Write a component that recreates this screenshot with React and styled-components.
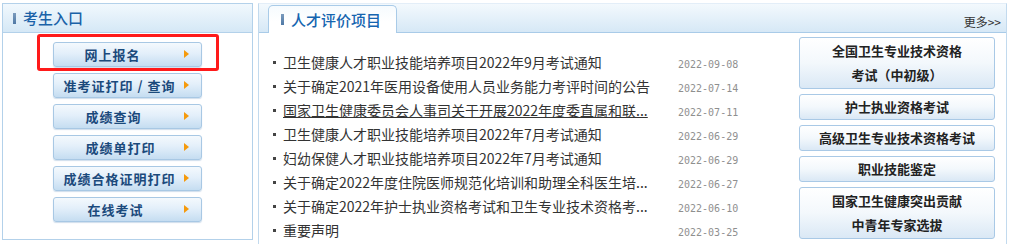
import React from 'react'
import styled, {createGlobalStyle} from 'styled-components'

const GlobalStyle = createGlobalStyle`
  html, body {
    margin: 0;
    padding: 0;
    background: #fff;
    overflow: hidden;
  }
  body {
    font-family: "Noto Sans CJK SC", "Liberation Sans", sans-serif;
    color: #333;
  }
`

const entries = [
  {label: '网上报名', indent: 31},
  {label: '准考证打印 / 查询', indent: 10},
  {label: '成绩查询', indent: 32},
  {label: '成绩单打印', indent: 32},
  {label: '成绩合格证明打印', indent: 10},
  {label: '在线考试', indent: 34},
]

const news = [
  {title: '卫生健康人才职业技能培养项目2022年9月考试通知', date: '2022-09-08'},
  {title: '关于确定2021年医用设备使用人员业务能力考评时间的公告', date: '2022-07-14'},
  {title: '国家卫生健康委员会人事司关于开展2022年度委直属和联...', date: '2022-07-11', active: true},
  {title: '卫生健康人才职业技能培养项目2022年7月考试通知', date: '2022-06-29'},
  {title: '妇幼保健人才职业技能培养项目2022年7月考试通知', date: '2022-06-29'},
  {title: '关于确定2022年度住院医师规范化培训和助理全科医生培...', date: '2022-06-27'},
  {title: '关于确定2022年护士执业资格考试和卫生专业技术资格考...', date: '2022-06-10'},
  {title: '重要声明', date: '2022-03-25'},
]

const projects = [
  ['全国卫生专业技术资格', '考试（中初级）'],
  ['护士执业资格考试'],
  ['高级卫生专业技术资格考试'],
  ['职业技能鉴定'],
  ['国家卫生健康突出贡献', '中青年专家选拔'],
]

export default function App() {
  return (
    <>
      <GlobalStyle />
      <Page>
        <Entrance>
          <EntranceHeader>
            <Marker />
            <HeaderTitle>考生入口</HeaderTitle>
          </EntranceHeader>
          <EntranceBody>
            {entries.map(e => (
              <EntryButton key={e.label} $indent={e.indent}>
                {e.label}
                <Arrow />
              </EntryButton>
            ))}
          </EntranceBody>
          <Highlight />
        </Entrance>

        <Projects>
          <TabBar>
            <Tab>
              <Marker />
              <TabTitle>人才评价项目</TabTitle>
            </Tab>
            <More>更多&gt;&gt;</More>
          </TabBar>
          <ProjectsBody>
            <NewsList>
              {news.map(n => (
                <NewsItem key={n.title + n.date}>
                  <Bullet />
                  <NewsTitle $active={n.active}>{n.title}</NewsTitle>
                  <NewsDate>{n.date}</NewsDate>
                </NewsItem>
              ))}
            </NewsList>
            <ProjectLinks>
              {projects.map(lines => (
                <ProjectButton key={lines[0]} $double={lines.length > 1}>
                  {lines.map(l => <span key={l}>{l}</span>)}
                </ProjectButton>
              ))}
            </ProjectLinks>
          </ProjectsBody>
        </Projects>
      </Page>
    </>
  )
}

const Page = styled.div`
  display: flex;
  align-items: flex-start;
  padding: 3px 0 0 2px;
  gap: 5px;
`

const Entrance = styled.section`
  position: relative;
  box-sizing: border-box;
  width: 251px;
  height: 237px;
  border: 1px solid #b3d1ea;
  background: #fff;
`

const EntranceHeader = styled.div`
  display: flex;
  align-items: center;
  height: 28px;
  padding-left: 10px;
  background: linear-gradient(#f1f8fd, #d5e8f6);
  border-bottom: 1px solid #b3d1ea;
`

const Marker = styled.i`
  display: block;
  width: 3px;
  height: 11px;
  background: linear-gradient(#7b9bbd, #4f79a6);
  margin-right: 7px;
`

const HeaderTitle = styled.h2`
  margin: 0;
  font-size: 15px;
  font-weight: 500;
  line-height: 28px;
  color: #1a62a8;
`

const EntranceBody = styled.div`
  display: flex;
  flex-direction: column;
  align-items: center;
  gap: 6px;
  padding-top: 9px;
  padding-right: 1px;
`

const EntryButton = styled.a`
  position: relative;
  display: flex;
  align-items: center;
  box-sizing: border-box;
  width: 149px;
  height: 25px;
  padding-left: ${p => p.$indent}px;
  border: 1px solid #a8c8e4;
  border-radius: 3px;
  background: linear-gradient(#f4f9fd 0%, #e3effa 45%, #c5ddf1 100%);
  box-shadow: 0 1px 1px rgba(120, 160, 200, 0.35);
  font-size: 13px;
  font-weight: 700;
  letter-spacing: 1px;
  color: #1b4a7c;
  white-space: nowrap;
  cursor: pointer;
`

const Arrow = styled.b`
  position: absolute;
  left: 130px;
  top: 7px;
  width: 0;
  height: 0;
  border-top: 4px solid transparent;
  border-bottom: 4px solid transparent;
  border-left: 5px solid #f59a0c;
`

const Highlight = styled.div`
  position: absolute;
  left: 34px;
  top: 30px;
  box-sizing: border-box;
  width: 182px;
  height: 37px;
  border: 3px solid #ff1a1a;
  border-radius: 3px;
  pointer-events: none;
`

const Projects = styled.section`
  box-sizing: border-box;
  width: 749px;
  height: 250px;
  border: 1px solid #c2daee;
  border-top-color: #e3eef8;
`

const TabBar = styled.div`
  display: flex;
  align-items: flex-end;
  justify-content: space-between;
  height: 28px;
  padding: 0 5px 0 9px;
  background: linear-gradient(#f3f9fd, #d6e8f6);
  border-bottom: 1px solid #a9cbe8;
`

const Tab = styled.div`
  display: flex;
  align-items: center;
  box-sizing: border-box;
  width: 129px;
  height: 28px;
  margin-bottom: -1px;
  padding-left: 12px;
  border: 1px solid #a9cbe8;
  border-bottom: none;
  border-radius: 5px 5px 0 0;
  background: linear-gradient(#f6fbfe, #ffffff 60%);
`

const TabTitle = styled.h2`
  margin: 0;
  font-size: 15px;
  font-weight: 500;
  color: #1565b0;
  line-height: 26px;
`

const More = styled.a`
  align-self: center;
  margin-top: 6px;
  font-size: 12px;
  color: #333;
  cursor: pointer;
`

const ProjectsBody = styled.div`
  display: flex;
  align-items: flex-start;
  padding-left: 14px;
`

const NewsList = styled.ul`
  list-style: none;
  margin: 0;
  padding: 17px 0 0;
  width: 466px;
`

const NewsItem = styled.li`
  display: flex;
  align-items: center;
  height: 24px;
`

const Bullet = styled.i`
  flex: none;
  width: 3px;
  height: 3px;
  background: #444;
  margin-right: 7px;
`

const NewsTitle = styled.a`
  flex: 1;
  min-width: 0;
  overflow: hidden;
  white-space: nowrap;
  font-size: 14px;
  color: #333;
  text-decoration: ${p => (p.$active ? 'underline' : 'none')};
  cursor: pointer;
`

const NewsDate = styled.span`
  flex: none;
  width: 61px;
  margin-top: 4px;
  font-family: "DejaVu Sans Mono", "Liberation Mono", monospace;
  font-size: 10px;
  color: #8f8f8f;
`

const ProjectLinks = styled.div`
  display: flex;
  flex-direction: column;
  gap: 5px;
  padding-top: 4px;
  margin-left: 60px;
`

const ProjectButton = styled.a`
  display: flex;
  flex-direction: column;
  align-items: center;
  justify-content: center;
  box-sizing: border-box;
  width: 196px;
  height: ${p => (p.$double ? '52px' : '26px')};
  border: 1px solid #a9c9e6;
  border-radius: 3px;
  background: linear-gradient(#ffffff 0%, #f3f8fc 50%, #dae8f5 100%);
  font-size: 13px;
  font-weight: 700;
  line-height: 24px;
  color: #222;
  cursor: pointer;
`
